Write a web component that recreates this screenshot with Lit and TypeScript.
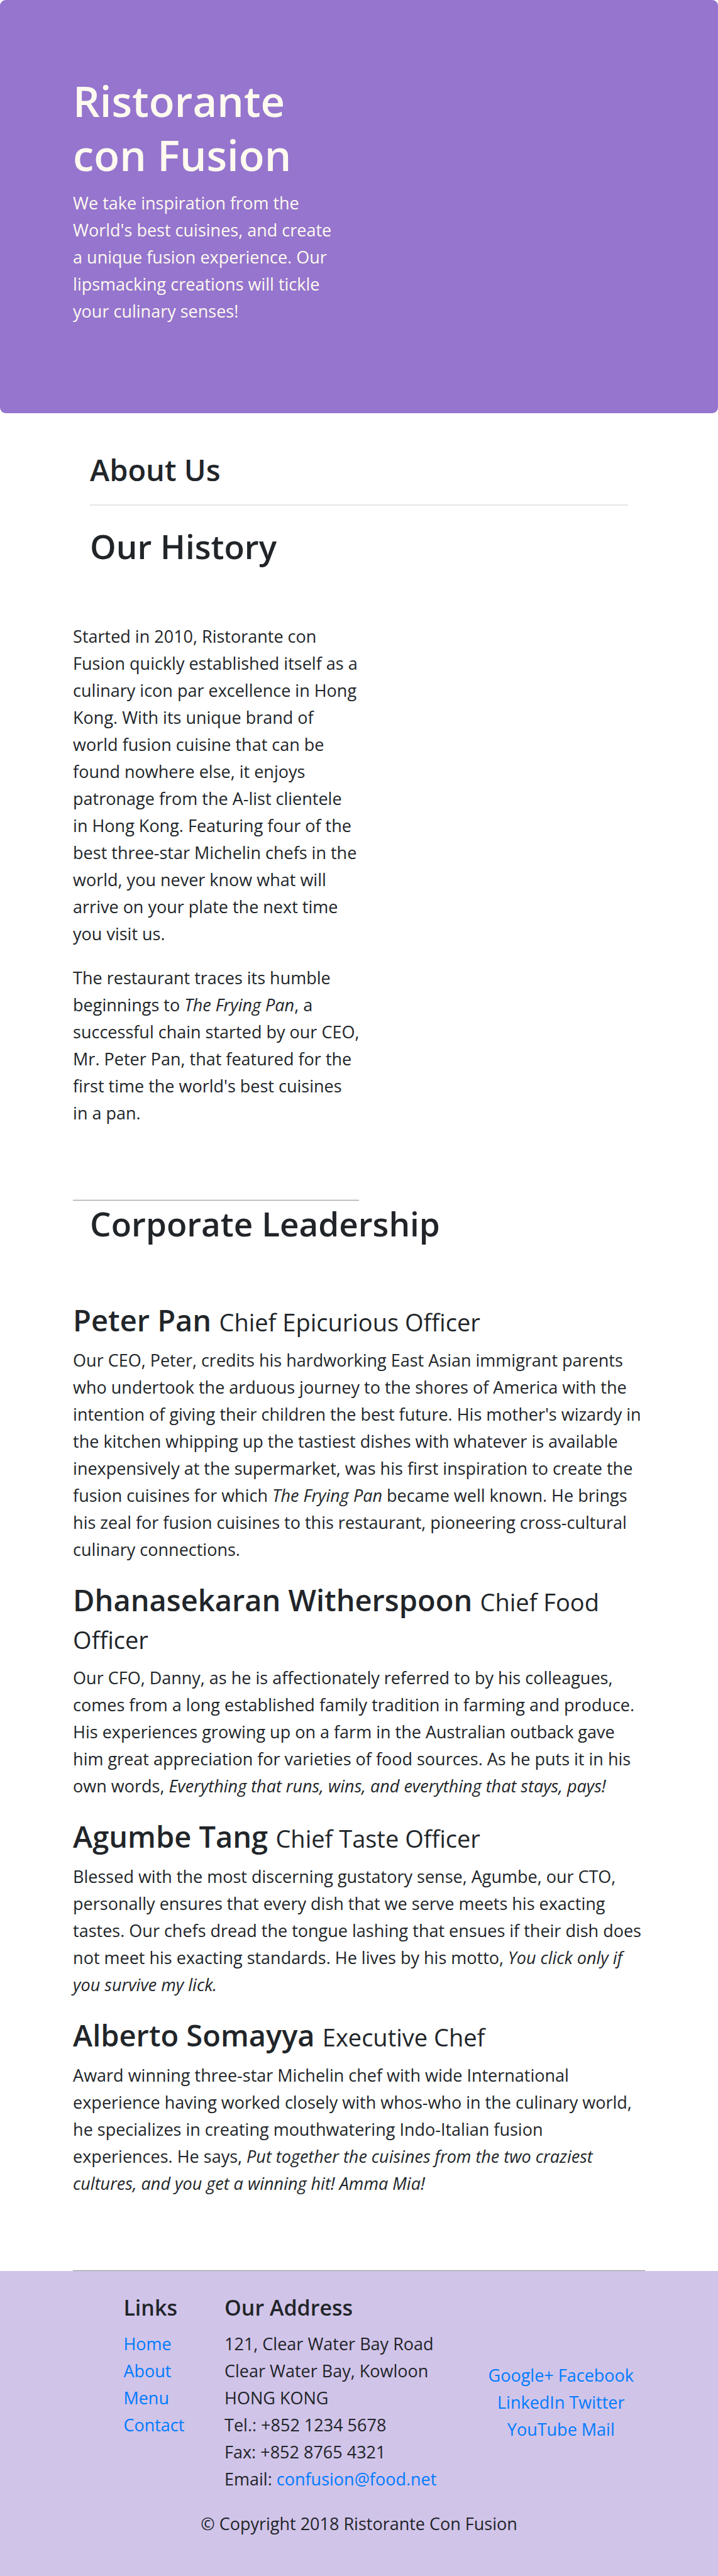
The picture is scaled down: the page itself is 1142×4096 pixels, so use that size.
import { LitElement, html, css, TemplateResult } from "lit";
import { customElement } from "lit/decorators.js";

interface Leader {
  name: string;
  role: string;
  bio: TemplateResult;
}

const leaders: Leader[] = [
  {
    name: "Peter Pan",
    role: "Chief Epicurious Officer",
    bio: html`Our CEO, Peter, credits his hardworking East Asian immigrant parents who undertook the arduous journey to the shores of America with the intention of giving their children the best future. His mother's wizardy in the kitchen whipping up the tastiest dishes with whatever is available inexpensively at the supermarket, was his first inspiration to create the fusion cuisines for which <em>The Frying Pan</em> became well known. He brings his zeal for fusion cuisines to this restaurant, pioneering cross-cultural culinary connections.`,
  },
  {
    name: "Dhanasekaran Witherspoon",
    role: "Chief Food Officer",
    bio: html`Our CFO, Danny, as he is affectionately referred to by his colleagues, comes from a long established family tradition in farming and produce. His experiences growing up on a farm in the Australian outback gave him great appreciation for varieties of food sources. As he puts it in his own words, <em>Everything that runs, wins, and everything that stays, pays!</em>`,
  },
  {
    name: "Agumbe Tang",
    role: "Chief Taste Officer",
    bio: html`Blessed with the most discerning gustatory sense, Agumbe, our CTO, personally ensures that every dish that we serve meets his exacting tastes. Our chefs dread the tongue lashing that ensues if their dish does not meet his exacting standards. He lives by his motto, <em>You click only if you survive my lick.</em>`,
  },
  {
    name: "Alberto Somayya",
    role: "Executive Chef",
    bio: html`Award winning three-star Michelin chef with wide International experience having worked closely with whos-who in the culinary world, he specializes in creating mouthwatering Indo-Italian fusion experiences. He says, <em>Put together the cuisines from the two craziest cultures, and you get a winning hit! Amma Mia!</em>`,
  },
];

@customElement("app-root")
export class AppRoot extends LitElement {
  static styles = css`
    :host {
      display: block;
      background: #fff;
      color: #212529;
      font-family: "Segoe UI", "Open Sans", "Noto Sans", sans-serif;
      font-size: 27px;
      line-height: 43px;
    }
    h1, h2, h3, h5, p, ul, address {
      margin: 0;
      padding: 0;
    }
    h1, h2, h3, h5 {
      font-weight: 600;
    }
    a {
      color: #007bff;
      text-decoration: none;
    }
    .container {
      box-sizing: border-box;
      width: 84.4%;
      margin: 0 auto;
      padding: 0 27px;
    }
    .hero {
      background: #9575cd;
      color: floralwhite;
      border-radius: 9px;
      padding: 117px 0 141px;
    }
    .hero-text {
      width: 50%;
    }
    .hero-text p {
      padding-right: 40px;
    }
    h1 {
      font-size: 67px;
      line-height: 86px;
      margin-bottom: 12px;
    }
    .inset {
      padding: 0 27px;
    }
    h2 {
      font-size: 53px;
      line-height: 68px;
    }
    h3 {
      font-size: 47px;
      line-height: 60px;
    }
    .about {
      padding-top: 60px;
    }
    .about h3 {
      padding-bottom: 25px;
      border-bottom: 2px solid #e5e5e5;
      margin-bottom: 31px;
    }
    .rule {
      margin: 0;
      border: 0;
      border-top: 1px solid #eee;
      border-bottom: 1px solid #9a9a9a;
    }
    .history {
      width: 50%;
      margin-top: 87px;
    }
    .history p + p {
      margin-top: 27px;
      margin-right: -8px;
    }
    .history .rule {
      margin-top: 116px;
    }
    .leadership {
      padding: 3px 0 116px;
    }
    .leadership h2 {
      margin-bottom: 89px;
    }
    .leader h3 {
      margin-bottom: 12px;
    }
    .leader + .leader {
      margin-top: 29px;
    }
    .role {
      font-size: 38px;
      font-weight: 400;
      line-height: 38px;
    }
    footer {
      background: #d1c4e9;
      padding-top: 37px;
    }
    .footer-grid {
      display: grid;
      grid-template-columns: 1fr 2fr 5fr 4fr;
      margin: 0 -27px;
    }
    .footer-grid > * {
      padding: 0 27px;
    }
    .links {
      grid-column: 2;
    }
    h5 {
      font-size: 34px;
      line-height: 43px;
      margin-bottom: 14px;
    }
    ul {
      list-style: none;
    }
    address {
      font-style: normal;
    }
    .footer-grid .social {
      align-self: center;
      text-align: center;
      padding-top: 28px;
    }
    .copyright {
      text-align: center;
      margin-top: 28px;
      padding-bottom: 62px;
    }
  `;

  render() {
    return html`
      <header class="hero">
        <div class="container">
          <div class="hero-text">
            <h1>Ristorante con Fusion</h1>
            <p>We take inspiration from the World's best cuisines, and create a unique fusion experience. Our lipsmacking creations will tickle your culinary senses!</p>
          </div>
        </div>
      </header>
      <main class="container">
        <section class="about">
          <div class="inset">
            <h3>About Us</h3>
            <h2>Our History</h2>
          </div>
          <div class="history">
            <p>Started in 2010, Ristorante con Fusion quickly established itself as a culinary icon par excellence in Hong Kong. With its unique brand of world fusion cuisine that can be found nowhere else, it enjoys patronage from the A-list clientele in Hong Kong. Featuring four of the best three-star Michelin chefs in the world, you never know what will arrive on your plate the next time you visit us.</p>
            <p>The restaurant traces its humble beginnings to <em>The Frying Pan</em>, a successful chain started by our CEO, Mr. Peter Pan, that featured for the first time the world's best cuisines in&nbsp;a&nbsp;pan.</p>
            <hr class="rule" />
          </div>
        </section>
        <section class="leadership">
          <h2 class="inset">Corporate Leadership</h2>
          ${leaders.map(
            (l) => html`
              <article class="leader">
                <h3>${l.name} <span class="role">${l.role}</span></h3>
                <p>${l.bio}</p>
              </article>
            `
          )}
        </section>
        <hr class="rule" />
      </main>
      <footer>
        <div class="container">
          <div class="footer-grid">
            <nav class="links" aria-label="Links">
              <h5>Links</h5>
              <ul>
                ${["Home", "About", "Menu", "Contact"].map((t) => html`<li><a href="#">${t}</a></li>`)}
              </ul>
            </nav>
            <div>
              <h5>Our Address</h5>
              <address>
                121, Clear Water Bay Road<br />
                Clear Water Bay, Kowloon<br />
                HONG KONG<br />
                Tel.: +852 1234 5678<br />
                Fax: +852 8765 4321<br />
                Email: <a href="mailto:confusion@food.net">confusion@food.net</a>
              </address>
            </div>
            <div class="social">
              <a href="#">Google+</a> <a href="#">Facebook</a> <a href="#">LinkedIn</a>
              <a href="#">Twitter</a> <a href="#">YouTube</a> <a href="#">Mail</a>
            </div>
          </div>
          <p class="copyright">© Copyright 2018 Ristorante Con Fusion</p>
        </div>
      </footer>
    `;
  }
}
